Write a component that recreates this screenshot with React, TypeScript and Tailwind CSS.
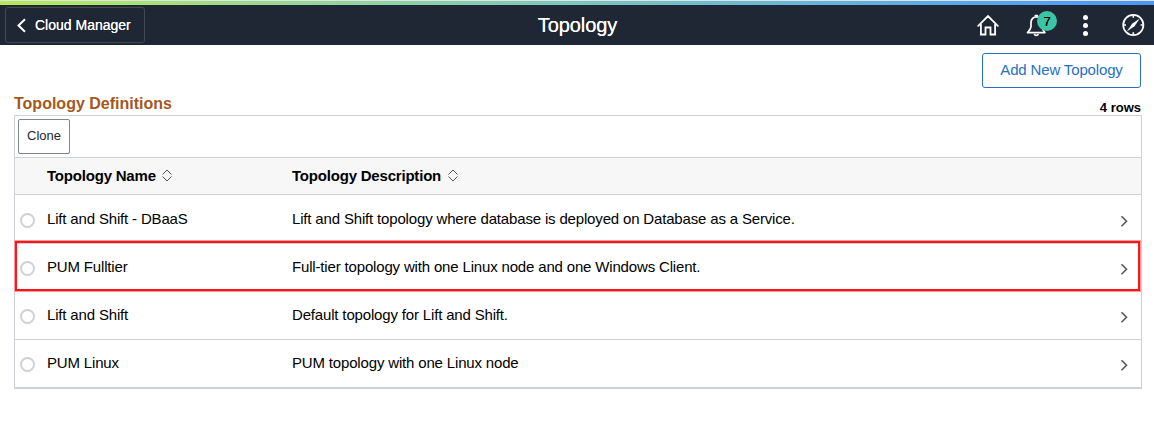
import React from "react";

const rows = [
  { name: "Lift and Shift - DBaaS", text: "Lift and Shift topology where database is deployed on Database as a Service." },
  { name: "PUM Fulltier", text: "Full-tier topology with one Linux node and one Windows Client.", marked: true },
  { name: "Lift and Shift", text: "Default topology for Lift and Shift." },
  { name: "PUM Linux", text: "PUM topology with one Linux node" },
];

function SortIcon() {
  return (
    <svg width="12" height="14" viewBox="0 0 12 14" fill="none" stroke="#555" strokeWidth="1">
      <path d="M1.500 5.500 6 1l4.500 4.500M1.500 7.500 6 12l4.500-4.500" />
    </svg>
  );
}

function HomeIcon() {
  return (
    <svg width="24" height="24" viewBox="0 0 24 24" fill="none" stroke="#fff" strokeWidth="1.800" strokeLinejoin="miter" strokeLinecap="round">
      <path d="M2.200 12.800 12 3l9.800 9.800M4.900 11v10.500h4.600v-7h5v7h4.600V11" />
    </svg>
  );
}

function BellIcon() {
  return (
    <svg width="24" height="24" viewBox="0 0 24 24" fill="none" stroke="#fff" strokeWidth="1.700" strokeLinejoin="round" strokeLinecap="round">
      <path d="M3.500 19.600h17.400c-1.800-1.800-2.400-3.300-2.700-6V9.600c-.3-3.800-2.300-5.800-5.700-5.800S7.300 5.800 7 9.600v4c-.3 2.700-1.700 4.200-3.500 6z" />
      <path d="M11.300 2.500h2M10.600 21.600c1 .9 2.400.9 3.400 0" />
    </svg>
  );
}

function CompassIcon() {
  return (
    <svg width="24" height="24" viewBox="0 0 24 24" fill="none" stroke="#fff" strokeWidth="1.700">
      <circle cx="12.300" cy="12" r="10.100" />
      <path d="M18.800 5.500 13.500 13.200 5.800 18.500 11.100 10.800z" fill="#fff" stroke="none" />
      <path d="M12.300 2.500v2.200M12.300 19.300v2.200M2.800 12h2.200M19.600 12h2.200" strokeWidth="1.600" />
    </svg>
  );
}

export default function App() {
  return (
    <div className="h-[441px] w-[1154px] overflow-hidden bg-white font-['Liberation_Sans',Arial,sans-serif] text-black">
      <div className="h-px bg-[#e2e2e2]" />
      <div className="h-1 bg-linear-to-r from-[#b5ea52] to-[#4a96ff]" />
      <header className="grid h-10 grid-cols-[1fr_auto_1fr] items-center bg-[#1e2733] text-white">
        <button className="ml-[5px] flex h-9 w-[140px] items-center rounded-[3px] border border-[#414953] pt-px pl-[10px] text-[14px]">
          <svg width="10" height="16" viewBox="0 0 10 16" fill="none" stroke="#fff" strokeWidth="2" className="mr-[9px]">
            <path d="M9 1.200 2.500 7.500l6.500 6.300" />
          </svg>
          <span className="[text-shadow:0_0_0.4px_#fff]">Cloud Manager</span>
        </button>
        <h1 className="pl-px text-[20px] tracking-[-0.1px] [text-shadow:0_0_0.5px_#fff]">Topology</h1>
        <div className="flex items-center justify-end pr-[9px]">
          <HomeIcon />
          <div className="relative ml-6">
            <BellIcon />
            <span className="absolute -top-[2px] left-[13px] flex size-5 items-center justify-center rounded-full bg-[#3cc5a4] pt-0.5 text-[13px] text-black [text-shadow:0_0_0.5px_#000]">7</span>
          </div>
          <div className="ml-[25px] flex w-6 flex-col items-center gap-[3px]">
            <i className="size-[5px] rounded-full bg-white" />
            <i className="size-[5px] rounded-full bg-white" />
            <i className="size-[5px] rounded-full bg-white" />
          </div>
          <div className="ml-6"><CompassIcon /></div>
        </div>
      </header>
      <main className="pr-3 pl-3.5">
        <div className="flex justify-end pt-2 pr-px">
          <button className="h-[35px] w-[159px] rounded-[3px] border border-[#2670c4] text-[15px] tracking-[-0.15px] text-[#2670c4]">Add New Topology</button>
        </div>
        <div className="flex h-[27px] items-end justify-between">
          <h2 className="text-[16px] leading-[22px] font-bold text-[#a4581b]">Topology Definitions</h2>
          <span className="pr-px text-[13px] leading-[14px] font-bold">4 rows</span>
        </div>
        <section className="border border-b-2 border-[#cdd2d7]">
          <div className="h-[41px] px-[3px] pt-[3px]">
            <button className="h-[35px] w-[52px] rounded-[2px] border border-[#7d8791] pb-0.5 text-[13px] text-[#1e2733]">Clone</button>
          </div>
          <div className="grid h-[38px] grid-cols-[245px_1fr] items-center border-y border-[#cdd2d7] bg-[#f7f7f7] pl-8 text-[15px] font-bold tracking-[-0.2px]">
            <div className="flex items-center gap-[5px]">Topology Name <SortIcon /></div>
            <div className="flex items-center gap-1.5">Topology Description <SortIcon /></div>
          </div>
          <div>
            {rows.map((row) => (
              <div key={row.name} className="relative grid h-12 grid-cols-[32px_245px_1fr_21px] text-[15px] leading-[48px] tracking-[-0.165px] not-first:shadow-[inset_0_1px_0_#cdd2d7]">
                <i className="mt-[18px] ml-[5px] size-[15px] rounded-full border-2 border-[#d0d0d0] bg-white" />
                <span>{row.name}</span>
                <span>{row.text}</span>
                <svg className="mt-[20px]" width="9" height="13" viewBox="0 0 9 13" fill="none" stroke="#555" strokeWidth="1.600">
                  <path d="m1.500 1.200 5 5-5 5" />
                </svg>
                {row.marked && (
                  <div className="pointer-events-none absolute -top-0.5 right-px bottom-0 left-0 z-10 border-2 border-[#fb1618] shadow-[0_0_0_1px_#ff9a9a]" />
                )}
              </div>
            ))}
          </div>
        </section>
      </main>
    </div>
  );
}
